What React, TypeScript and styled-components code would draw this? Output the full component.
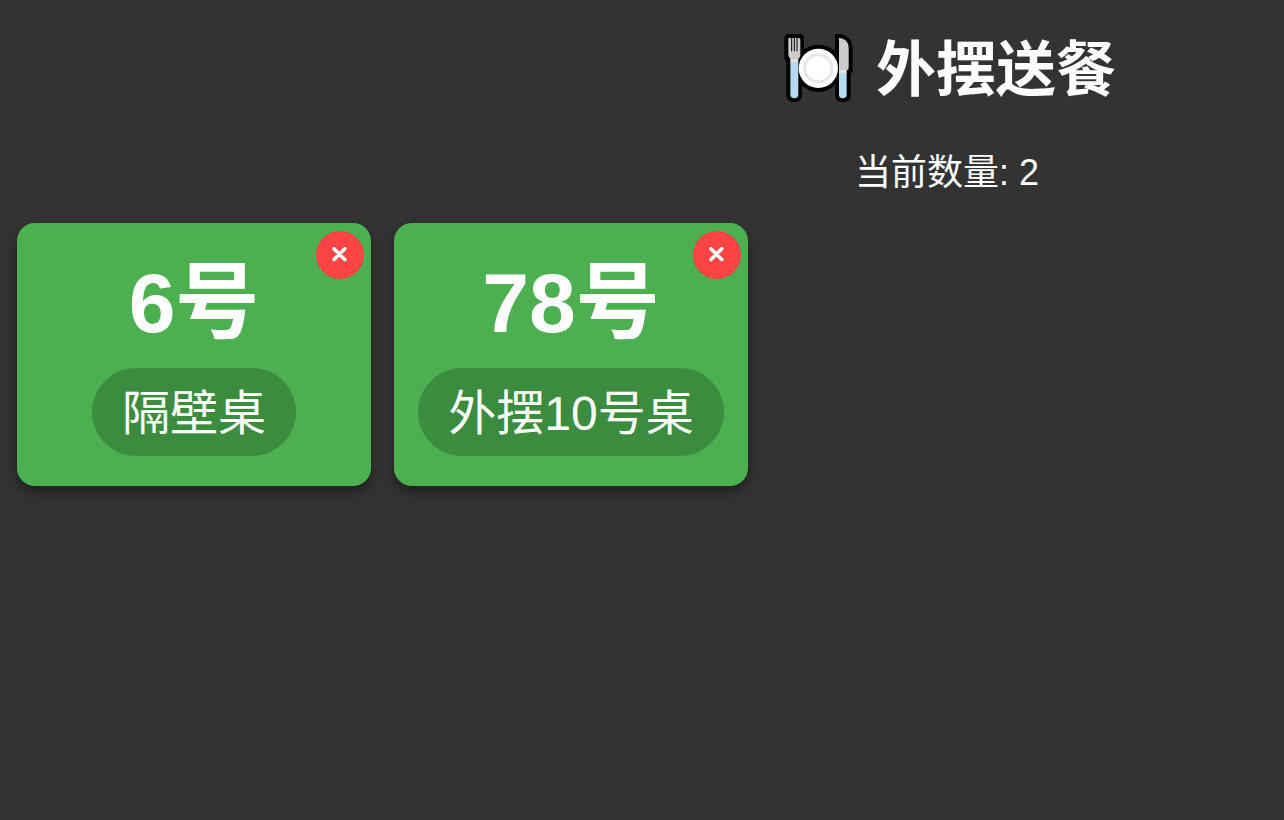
import React, { useState } from "react";
import styled, { createGlobalStyle } from "styled-components";

const GlobalStyle = createGlobalStyle`
  * {
    box-sizing: border-box;
  }

  body {
    margin: 0;
    background: #333333;
    color: #ffffff;
    font-family: "Liberation Sans", "Noto Sans CJK SC", sans-serif;
  }
`;

const Page = styled.main`
  min-height: 100vh;
  padding: 24px 0;
  overflow-x: hidden;
`;

const Header = styled.header`
  display: flex;
  flex-direction: column;
  align-items: center;
  gap: 28px;
  padding-left: 610px;
  white-space: nowrap;
`;

const Title = styled.h1`
  display: flex;
  align-items: flex-start;
  gap: 16px;
  margin: 0;
  font-size: 60px;
  font-weight: 700;
  line-height: 94px;
`;

const PlateSvg = styled.svg`
  width: 82px;
  height: 72px;
  margin-top: 8px;
`;

const Count = styled.p`
  margin: 0;
  font-size: 36px;
  line-height: 54px;
`;

const OrderGrid = styled.ul`
  display: grid;
  grid-template-columns: repeat(auto-fill, 354px);
  gap: 23px;
  margin: 0;
  padding: 23px 17px;
  list-style: none;
`;

const Card = styled.li`
  position: relative;
  display: flex;
  flex-direction: column;
  align-items: center;
  gap: 16px;
  padding: 32px 24px 30px;
  border-radius: 18px;
  background: #4caf50;
  box-shadow: 0 6px 12px rgba(0, 0, 0, 0.4);
`;

const OrderNumber = styled.h2`
  margin: 0;
  font-size: 84px;
  font-weight: 700;
  line-height: 97px;
  white-space: nowrap;
`;

const Place = styled.span`
  padding: 10px 30px 6px;
  border-radius: 44px;
  background: rgba(0, 0, 0, 0.2);
  font-size: 48px;
  line-height: 72px;
  white-space: nowrap;
`;

const RemoveButton = styled.button`
  position: absolute;
  top: 8px;
  right: 7px;
  display: flex;
  align-items: center;
  justify-content: center;
  width: 48px;
  height: 48px;
  padding: 0;
  border: 0;
  border-radius: 50%;
  background: #ff4444;
  color: #ffffff;
  cursor: pointer;
`;

function PlateIcon() {
  return (
    <PlateSvg viewBox="6 18 246 216" aria-hidden="true">
      <g fill="#000000">
        <path d="M38 24H70Q84 24 84 38V86L78 108V207Q78 229 55 229Q31 229 31 207V112L25 96V38Q25 24 38 24Z" />
        <path d="M177 24H187C213 24 230 43 230 67V136Q230 140 224 142V207Q224 229 200 229Q177 229 177 207Z" />
        <circle cx="127" cy="127" r="71" />
      </g>
      <path fill="#cccccc" d="M37 38Q37 36 41 36H68Q73 36 73 41V88Q73 94 66 99V104H44V99Q38 95 37 87Z" />
      <path stroke="#000000" strokeWidth="3" d="M47 36V76M55 36V76M63 36V76" />
      <path fill="#e8dfdf" d="M43 99H67V109H43Z" />
      <path fill="#b3dbf2" d="M43 108H67V205Q67 217 55 217Q43 217 43 205Z" />
      <path fill="#cccccc" d="M189 36C207 37 218 49 218 66V126Q218 131 212 133H189Z" />
      <path fill="#e8dfdf" d="M189 132H212V142H189Z" />
      <path fill="#b3dbf2" d="M189 141H212V205Q212 217 200 217Q189 217 189 205Z" />
      <circle cx="127" cy="127" r="59" fill="#ffffff" />
      <circle cx="127" cy="127" r="41" fill="#ffffff" stroke="#e6e6e6" strokeWidth="9" />
    </PlateSvg>
  );
}

function CrossIcon() {
  return (
    <svg width="16" height="16" viewBox="0 0 16 16" aria-hidden="true">
      <path d="M2 1.8L12.8 12.6M12.8 1.8L2 12.6" stroke="#ffffff" strokeWidth="3.6" strokeLinecap="round" />
    </svg>
  );
}

interface Order {
  id: number;
  place: string;
}

const initialOrders: Order[] = [
  { id: 6, place: "隔壁桌" },
  { id: 78, place: "外摆10号桌" },
];

export default function App() {
  const [orders, setOrders] = useState(initialOrders);
  const remove = (id: number) => setOrders((list) => list.filter((order) => order.id !== id));

  return (
    <>
      <GlobalStyle />
      <Page>
        <Header>
          <Title>
            <PlateIcon />
            外摆送餐
          </Title>
          <Count>当前数量: {orders.length}</Count>
        </Header>
        <OrderGrid>
          {orders.map((order) => (
            <Card key={order.id}>
              <OrderNumber>{order.id}号</OrderNumber>
              <Place>{order.place}</Place>
              <RemoveButton type="button" aria-label={`删除 ${order.id}号`} onClick={() => remove(order.id)}>
                <CrossIcon />
              </RemoveButton>
            </Card>
          ))}
        </OrderGrid>
      </Page>
    </>
  );
}
